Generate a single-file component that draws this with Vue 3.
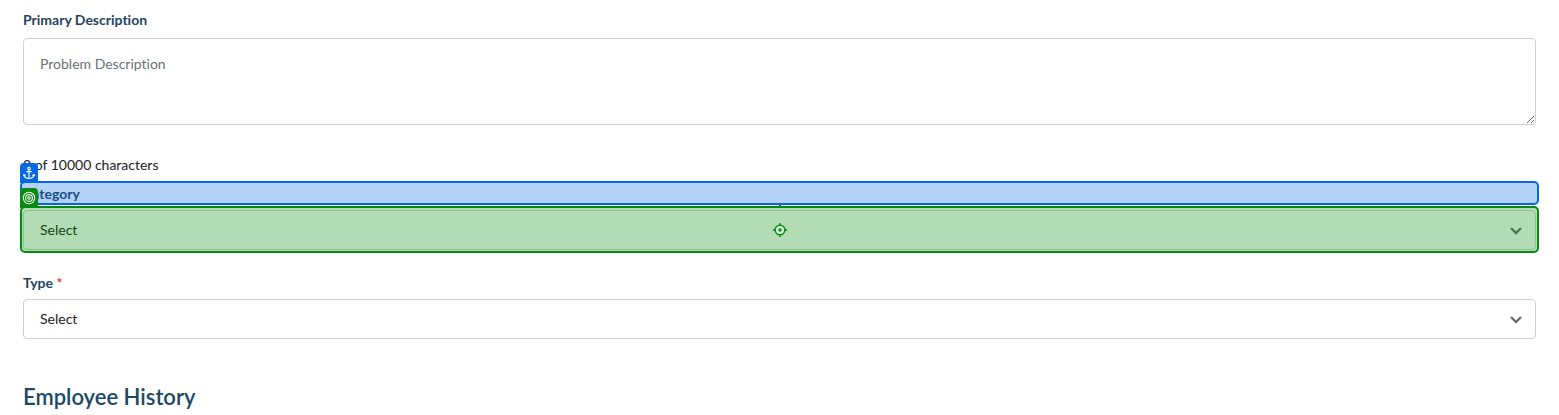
<script setup>
import { ref } from 'vue'

const description = ref('')
const category = ref('')
const type = ref('')
const maxLength = 10000
</script>

<template>
  <form class="form" @submit.prevent>
    <div class="field field--text">
      <label class="label" for="description">Primary Description</label>
      <textarea
        id="description"
        v-model="description"
        class="textarea"
        placeholder="Problem Description"
        :maxlength="maxLength"
      ></textarea>
      <p class="counter">{{ description.length }} of {{ maxLength }} characters</p>
    </div>

    <div class="field">
      <div class="region">
        <label class="label" for="category">Category</label>
        <div class="mark mark--anchor">
          <span class="tab">
            <svg viewBox="0 0 14 14" width="14" height="14" aria-hidden="true">
              <g fill="none" stroke="#fff" stroke-width="1.1" stroke-linecap="round">
                <circle cx="7" cy="2.5" r="1.3" />
                <path d="M7 4v8.4M4.6 5.6h4.8M2 8.6c.3 2.4 2.4 3.8 5 3.9 2.6-.1 4.7-1.5 5-3.9M1.5 9.7L2 8.5l1.2.8M12.5 9.7L12 8.5l-1.2.8" />
              </g>
            </svg>
          </span>
          <span class="link"></span>
        </div>
      </div>
      <div class="region">
        <select id="category" v-model="category" class="select">
          <option value="">Select</option>
        </select>
        <svg class="chevron" viewBox="0 0 12 8" width="12" height="8" aria-hidden="true">
          <path d="M1 1l5 5 5-5" fill="none" stroke="#6b6f73" stroke-width="2.4" />
        </svg>
        <div class="mark mark--target">
          <span class="tab">
            <svg viewBox="0 0 14 14" width="14" height="14" aria-hidden="true">
              <g fill="none" stroke="#fff" stroke-width="1.1">
                <circle cx="7" cy="7" r="5.7" />
                <circle cx="7" cy="7" r="3.4" />
                <circle cx="7" cy="7" r="1.2" />
              </g>
            </svg>
          </span>
          <svg class="crosshair" viewBox="0 0 14 14" width="14" height="14" aria-hidden="true">
            <circle cx="7" cy="7" r="4.8" fill="#d5ecd5" stroke="#0a8f14" stroke-width="1.5" />
            <circle cx="7" cy="7" r="1.7" fill="#0a8f14" />
            <path d="M7 0v3M7 11v3M0 7h3M11 7h3" stroke="#0a8f14" stroke-width="1.5" />
          </svg>
        </div>
      </div>
    </div>

    <div class="field">
      <label class="label" for="type">Type <span class="required">*</span></label>
      <div class="region">
        <select id="type" v-model="type" class="select" required>
          <option value="">Select</option>
        </select>
        <svg class="chevron" viewBox="0 0 12 8" width="12" height="8" aria-hidden="true">
          <path d="M1 1l5 5 5-5" fill="none" stroke="#6b6f73" stroke-width="2.4" />
        </svg>
      </div>
    </div>

    <h2 class="heading">Employee History</h2>
  </form>
</template>

<style>
body {
  margin: 0;
  background: #fff;
}
</style>

<style scoped>
.form {
  padding: 10px 23px 0;
  font-family: Lato, sans-serif;
  font-size: 14px;
  line-height: 20px;
  font-variant-ligatures: none;
  color: #222;
}

.field {
  display: flex;
  flex-direction: column;
  gap: 6px;
  margin-bottom: 23px;
}

.field--text {
  gap: 8px;
  margin-bottom: 9px;
}

.label {
  display: block;
  font-weight: 700;
  color: #1f4560;
}

.required {
  font-weight: 700;
  color: #d9363e;
}

.textarea,
.select {
  display: block;
  box-sizing: border-box;
  width: 100%;
  margin: 0;
  border: 1px solid #ced0d8;
  border-radius: 4px;
  background: #fff;
  font: inherit;
  font-variant-ligatures: none;
  color: #222;
  outline: none;
}

.textarea {
  height: 87px;
  padding: 15px 16px;
  resize: vertical;
}

.textarea::placeholder {
  color: #6b7177;
  opacity: 1;
}

.select {
  height: 40px;
  padding: 0 40px 0 16px;
  appearance: none;
}

.counter {
  margin: 22px 0 0;
}

.region {
  position: relative;
}

.chevron {
  position: absolute;
  top: 17px;
  right: 14px;
  pointer-events: none;
}

.mark {
  position: absolute;
  box-sizing: border-box;
  border: 2px solid;
  border-radius: 5px;
  pointer-events: none;
}

.mark--anchor {
  inset: -3px -3px -1px;
  border-color: #0568e0;
  background: rgba(5, 104, 224, 0.3);
}

.mark--target {
  inset: -4px -3px -3px;
  border-color: #078a12;
  background: rgba(7, 138, 7, 0.3);
}

.tab {
  position: absolute;
  left: -2px;
  bottom: 100%;
  box-sizing: border-box;
  display: flex;
  align-items: center;
  justify-content: center;
  width: 18px;
  height: 20px;
  border-radius: 4px 4px 0 0;
}

.mark--anchor .tab {
  background: #0568e0;
}

.mark--target .tab {
  background: #078a12;
}

.link {
  position: absolute;
  top: 100%;
  left: 50%;
  width: 2px;
  height: 3px;
  margin-left: -1px;
  background: #0568e0;
}

.crosshair {
  position: absolute;
  top: 50%;
  left: 50%;
  transform: translate(-50%, -50%);
}

.heading {
  margin: 43px 0 0;
  font-size: 22px;
  line-height: 30px;
  font-weight: 600;
  color: #1b4865;
}
</style>
